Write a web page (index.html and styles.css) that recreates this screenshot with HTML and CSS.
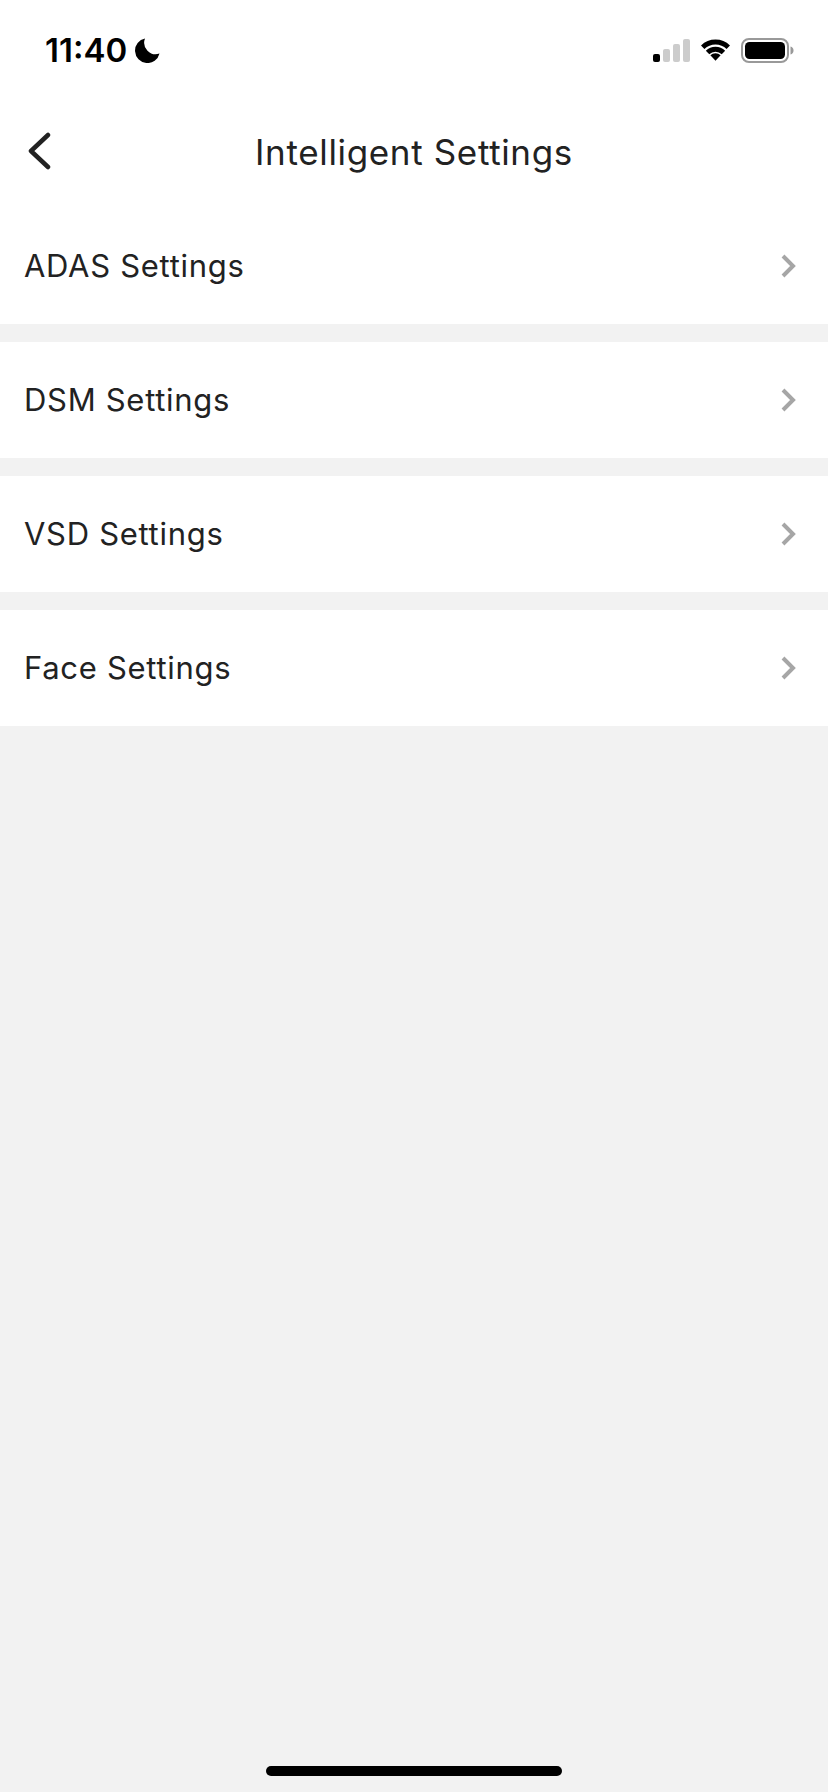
FILE: index.html
```html
<!DOCTYPE html>
<html lang="en">
<head>
<meta charset="utf-8">
<title>Intelligent Settings</title>
<link rel="stylesheet" href="styles.css">
</head>
<body>
<div class="screen">
  <div class="top">
    <div class="status">
      <div class="status-left">
        <span class="time">11:40</span>
        <svg class="moon" viewBox="0 0 25 25"><path d="M10 0.500A12.400 12.400 0 1 0 24.500 15.500 11.500 11.500 0 0 1 10 0.500z"/></svg>
      </div>
      <div class="status-right">
        <svg class="signal" viewBox="0 0 37 23">
          <rect x="0" y="15" width="7" height="8" rx="2" fill="#000"/>
          <rect x="10" y="10" width="7" height="13" rx="2" fill="#ccc"/>
          <rect x="20" y="5" width="7" height="18" rx="2" fill="#ccc"/>
          <rect x="30" y="0" width="7" height="23" rx="2" fill="#ccc"/>
        </svg>
        <svg class="wifi" viewBox="0 0 32 24">
          <path d="M16 23l-5.300-5.500a7.500 7.500 0 0 1 10.600 0z"/>
          <path d="M7.800 14.600a11.600 11.600 0 0 1 16.400 0" class="arc"/>
          <path d="M2.800 9.200a18.800 18.800 0 0 1 26.400 0" class="arc"/>
        </svg>
        <svg class="battery" viewBox="0 0 53 25">
          <rect x="1" y="1" width="46" height="23" rx="7" fill="none" stroke="#999" stroke-width="2"/>
          <rect x="4" y="4" width="40" height="17" rx="4.500" fill="#000"/>
          <path d="M49.500 8.500c2 .5 3 2 3 4s-1 3.500-3 4z" fill="#999"/>
        </svg>
      </div>
    </div>
    <header class="nav">
      <svg class="back" viewBox="0 0 24 38"><path d="M21 3L4 19l17 16"/></svg>
      <h1 class="title">Intelligent Settings</h1>
    </header>
  </div>
  <ul class="list">
    <li class="row"><span class="label">ADAS Settings</span><svg class="chev" viewBox="0 0 16 24"><path d="M2 2l10 10L2 22"/></svg></li>
    <li class="row"><span class="label">DSM Settings</span><svg class="chev" viewBox="0 0 16 24"><path d="M2 2l10 10L2 22"/></svg></li>
    <li class="row"><span class="label">VSD Settings</span><svg class="chev" viewBox="0 0 16 24"><path d="M2 2l10 10L2 22"/></svg></li>
    <li class="row"><span class="label">Face Settings</span><svg class="chev" viewBox="0 0 16 24"><path d="M2 2l10 10L2 22"/></svg></li>
  </ul>
  <div class="home"></div>
</div>
</body>
</html>
```

FILE: styles.css
```css
* { box-sizing: border-box; }
html, body { margin: 0; padding: 0; }
body { font-family: Inter, "Noto Sans", sans-serif; color: #222; background: #f2f2f2; }
.screen { width: 828px; height: 1792px; display: flex; flex-direction: column; background: #f2f2f2; }
.top { background: #fff; height: 208px; flex: none; }
.status { height: 100px; display: flex; justify-content: space-between; align-items: flex-start; padding: 33px 34px 0 45px; }
.status-left { display: flex; align-items: center; gap: 8px; height: 34px; }
.time { font-size: 33px; line-height: 34px; font-weight: 600; color: #000; }
.moon { width: 25px; height: 25px; fill: #000; }
.status-right { display: flex; align-items: center; gap: 10px; height: 34px; }
.signal { width: 37px; height: 23px; }
.wifi { width: 31px; height: 24px; fill: #000; }
.wifi .arc { fill: none; stroke: #000; stroke-width: 5; }
.battery { width: 53px; height: 25px; }
.nav { height: 108px; position: relative; display: flex; align-items: center; justify-content: center; padding-bottom: 4px; }
.back { position: absolute; left: 27px; top: 32px; width: 24px; height: 38px; fill: none; stroke: #222; stroke-width: 4.500; stroke-linecap: round; stroke-linejoin: round; }
.title { margin: 0; font-size: 35px; line-height: 44px; font-weight: 400; letter-spacing: 0.65px; color: #222; }
.list { list-style: none; margin: 0; padding: 0; display: flex; flex-direction: column; gap: 18px; }
.row { height: 116px; background: #fff; display: flex; align-items: center; justify-content: space-between; padding: 0 31px 0 24px; font-size: 31px; font-weight: 400; letter-spacing: 0.7px; color: #222; }
.label { padding-bottom: 2px; }
.chev { width: 16px; height: 24px; fill: none; stroke: #a6a6a6; stroke-width: 4; }
.home { margin: auto auto 16px; width: 296px; height: 10px; border-radius: 5px; background: #000; }
```
